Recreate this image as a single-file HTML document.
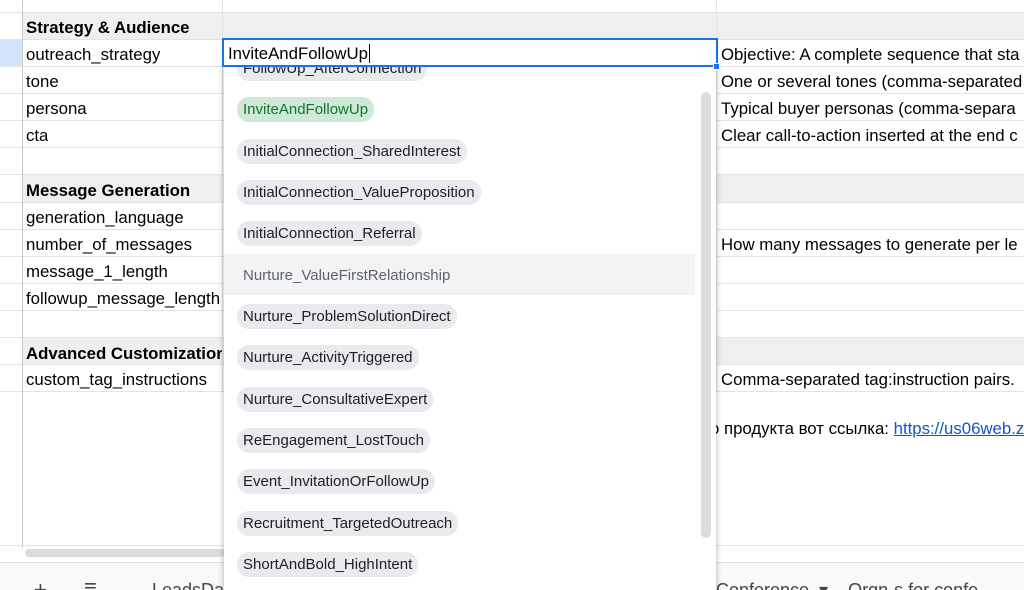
<!DOCTYPE html>
<html><head><meta charset="utf-8"><style>
*{margin:0;padding:0;box-sizing:border-box}
html{overflow:hidden;width:1024px;height:590px}
body{width:1024px;height:590px;overflow:hidden;background:#fff;font-family:"Liberation Sans",Arial,sans-serif;position:relative;color:#000}
.a{position:absolute}
.hl{position:absolute;left:0;width:1024px;height:1px;background:#e2e3e3}
.vl{position:absolute;top:0;width:1px;background:#c7c7c7}
.t{position:absolute;font-size:16.8px;line-height:27px;white-space:nowrap;overflow:hidden;padding-top:2px}
.g{position:absolute;left:22px;width:1002px;height:27px;background:#efefef}
.chip{position:absolute;left:237px;height:25px;border-radius:12px;background:#e8eaed;font-size:15px;line-height:25px;padding:0 6px;color:#202124;white-space:nowrap}
</style></head><body>
<div class="g" style="top:12px"></div>
<div class="g" style="top:175px"></div>
<div class="g" style="top:338px"></div>
<div class="a" style="left:0;top:39px;width:22px;height:27px;background:#d3e3fd"></div>
<div class="hl" style="top:12px"></div><div class="hl" style="top:39px"></div><div class="hl" style="top:66px"></div><div class="hl" style="top:93px"></div><div class="hl" style="top:120px"></div><div class="hl" style="top:147px"></div><div class="hl" style="top:174px"></div><div class="hl" style="top:202px"></div><div class="hl" style="top:229px"></div><div class="hl" style="top:256px"></div><div class="hl" style="top:283px"></div><div class="hl" style="top:310px"></div><div class="hl" style="top:337px"></div><div class="hl" style="top:364px"></div><div class="hl" style="top:391px"></div>
<div class="vl" style="left:22px;height:548px"></div>
<div class="vl" style="left:222px;height:391px;background:#e2e3e3"></div>
<div class="vl" style="left:716px;height:391px;background:#e2e3e3"></div>
<div class="t" style="left:26px;top:12px;font-weight:bold">Strategy &amp; Audience</div>
<div class="t" style="left:26px;top:39px">outreach_strategy</div>
<div class="t" style="left:26px;top:66px">tone</div>
<div class="t" style="left:26px;top:93px">persona</div>
<div class="t" style="left:26px;top:120px">cta</div>
<div class="t" style="left:26px;top:175px;font-weight:bold">Message Generation</div>
<div class="t" style="left:26px;top:202px">generation_language</div>
<div class="t" style="left:26px;top:229px">number_of_messages</div>
<div class="t" style="left:26px;top:256px">message_1_length</div>
<div class="t" style="left:26px;top:283px;width:196px">followup_message_length</div>
<div class="t" style="left:26px;top:338px;font-weight:bold;width:196px">Advanced Customization</div>
<div class="t" style="left:26px;top:364px">custom_tag_instructions</div>
<div class="t" style="left:721px;top:39px">Objective: A complete sequence that sta</div>
<div class="t" style="left:721px;top:66px">One or several tones (comma-separated</div>
<div class="t" style="left:721px;top:93px">Typical buyer personas (comma-separa</div>
<div class="t" style="left:721px;top:120px">Clear call-to-action inserted at the end c</div>
<div class="t" style="left:721px;top:229px">How many messages to generate per le</div>
<div class="t" style="left:721px;top:364px">Comma-separated tag:instruction pairs.</div>
<div class="t" style="left:710px;top:413px">о продукта вот ссылка: <span style="color:#1155cc;text-decoration:underline">https://us06web.z</span></div>
<div class="hl" style="top:545px;background:#e2e3e3"></div>
<div class="a" style="left:25px;top:549px;width:200px;height:8px;border-radius:4px;background:#dadce0"></div>
<div class="a" style="left:0;top:562px;width:1024px;height:28px;background:#f8f9fa;border-top:1px solid #e0e0e0"></div>
<div class="t" style="left:34px;top:574px;font-size:22px;color:#444">+</div>
<div class="t" style="left:84px;top:572px;font-size:22px;color:#444">≡</div>
<div class="t" style="left:152px;top:575px;font-size:18px;color:#444">LeadsDa</div>
<div class="t" style="left:716px;top:575px;font-size:18px;color:#444">Conference &nbsp;▾ &nbsp;&nbsp;&nbsp;Orgn-s for confe</div>
<div class="a" style="left:224px;top:62px;width:492px;height:528px;background:#fff;box-shadow:0 2px 6px rgba(0,0,0,.3);overflow:hidden">
<div class="a" style="left:0;top:192px;width:471px;height:41px;background:#f1f3f4"></div>
<div class="a" style="left:477px;top:30px;width:10px;height:446px;border-radius:5px;background:#dadce0"></div>
</div>
<div class="chip" style="top:56px">FollowUp_AfterConnection</div>
<div class="chip" style="top:97px;background:#ceead6;color:#137333;font-weight:500">InviteAndFollowUp</div>
<div class="chip" style="top:139px">InitialConnection_SharedInterest</div>
<div class="chip" style="top:180px">InitialConnection_ValueProposition</div>
<div class="chip" style="top:221px">InitialConnection_Referral</div>
<div class="chip" style="top:263px;background:transparent;color:#5f6368">Nurture_ValueFirstRelationship</div>
<div class="chip" style="top:304px">Nurture_ProblemSolutionDirect</div>
<div class="chip" style="top:345px">Nurture_ActivityTriggered</div>
<div class="chip" style="top:387px">Nurture_ConsultativeExpert</div>
<div class="chip" style="top:428px">ReEngagement_LostTouch</div>
<div class="chip" style="top:469px">Event_InvitationOrFollowUp</div>
<div class="chip" style="top:511px">Recruitment_TargetedOutreach</div>
<div class="chip" style="top:552px">ShortAndBold_HighIntent</div>
<div class="a" style="left:222px;top:38px;width:496px;height:29px;border:2px solid #1a73e8;background:#fff"></div>
<div class="t" style="left:228px;top:38px">InviteAndFollowUp<span style="border-left:1px solid #000;margin-left:1px"></span></div>
<div class="a" style="left:713px;top:63px;width:7px;height:7px;background:#1a73e8;border:1px solid #fff;border-radius:1px"></div>
</body></html>
